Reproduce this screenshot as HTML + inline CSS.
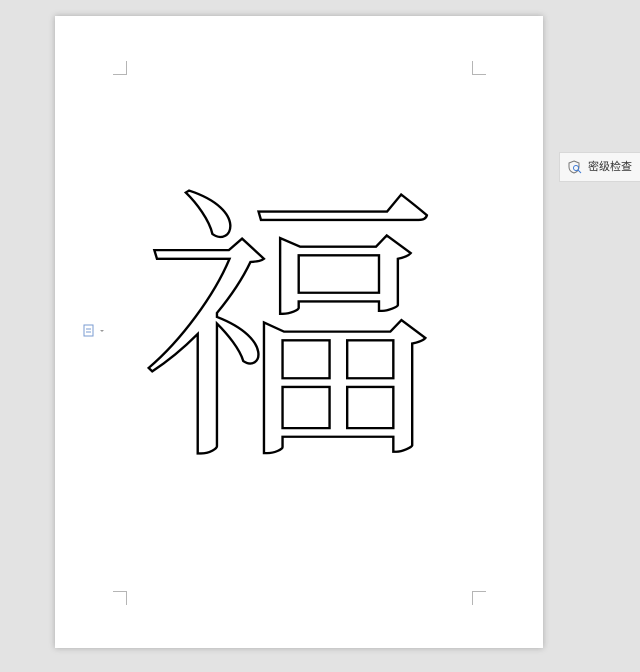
<!DOCTYPE html>
<html><head><meta charset="utf-8"><style>
html,body{margin:0;padding:0}
body{width:640px;height:672px;background:#e3e3e3;position:relative;overflow:hidden;font-family:"Liberation Sans","Noto Sans CJK SC",sans-serif}
.page{position:absolute;left:55px;top:16px;width:488px;height:632px;background:#fff;box-shadow:0 0 6px rgba(0,0,0,.25)}
.c{position:absolute;width:13px;height:13px;border-color:#b5b5b5;border-style:solid;border-width:0}
.fu{position:absolute;left:140px;top:158px;width:300px;height:300px;font-family:"Noto Serif CJK SC","WenQuanYi Zen Hei",serif;font-size:288px;line-height:300px;text-align:center;color:transparent;-webkit-text-stroke:2.3px #000;transform:scaleX(1.04)}
.btn{position:absolute;left:559px;top:152px;width:90px;height:28px;background:#f7f7f7;border:1px solid #d8d8d8;font-size:11px;color:#333;line-height:28px}
</style></head><body>
<div class="page">
<div class="c" style="left:58px;top:45px;border-right-width:1px;border-bottom-width:1px"></div>
<div class="c" style="left:417px;top:45px;border-left-width:1px;border-bottom-width:1px"></div>
<div class="c" style="left:58px;top:575px;border-right-width:1px;border-top-width:1px"></div>
<div class="c" style="left:417px;top:575px;border-left-width:1px;border-top-width:1px"></div>
</div>
<div class="fu">福</div>
<svg style="position:absolute;left:83px;top:324px" width="24" height="14"><rect x="1" y="1" width="9" height="11" fill="none" stroke="#7a9bd0"/><path d="M3 5h5M3 8h5" stroke="#7a9bd0"/><path d="M17 6l2 2 2-2z" fill="#999"/></svg>
<div class="btn"><svg style="position:absolute;left:8px;top:7px" width="14" height="14"><path d="M6 1l5 2v4c0 3-2 5-5 6-3-1-5-3-5-6V3z" fill="none" stroke="#777"/><circle cx="8" cy="8" r="2.5" fill="none" stroke="#3d7ad6"/><path d="M10 10l3 3" stroke="#3d7ad6"/></svg><span style="position:absolute;left:28px">密级检查</span></div>
</body></html>
